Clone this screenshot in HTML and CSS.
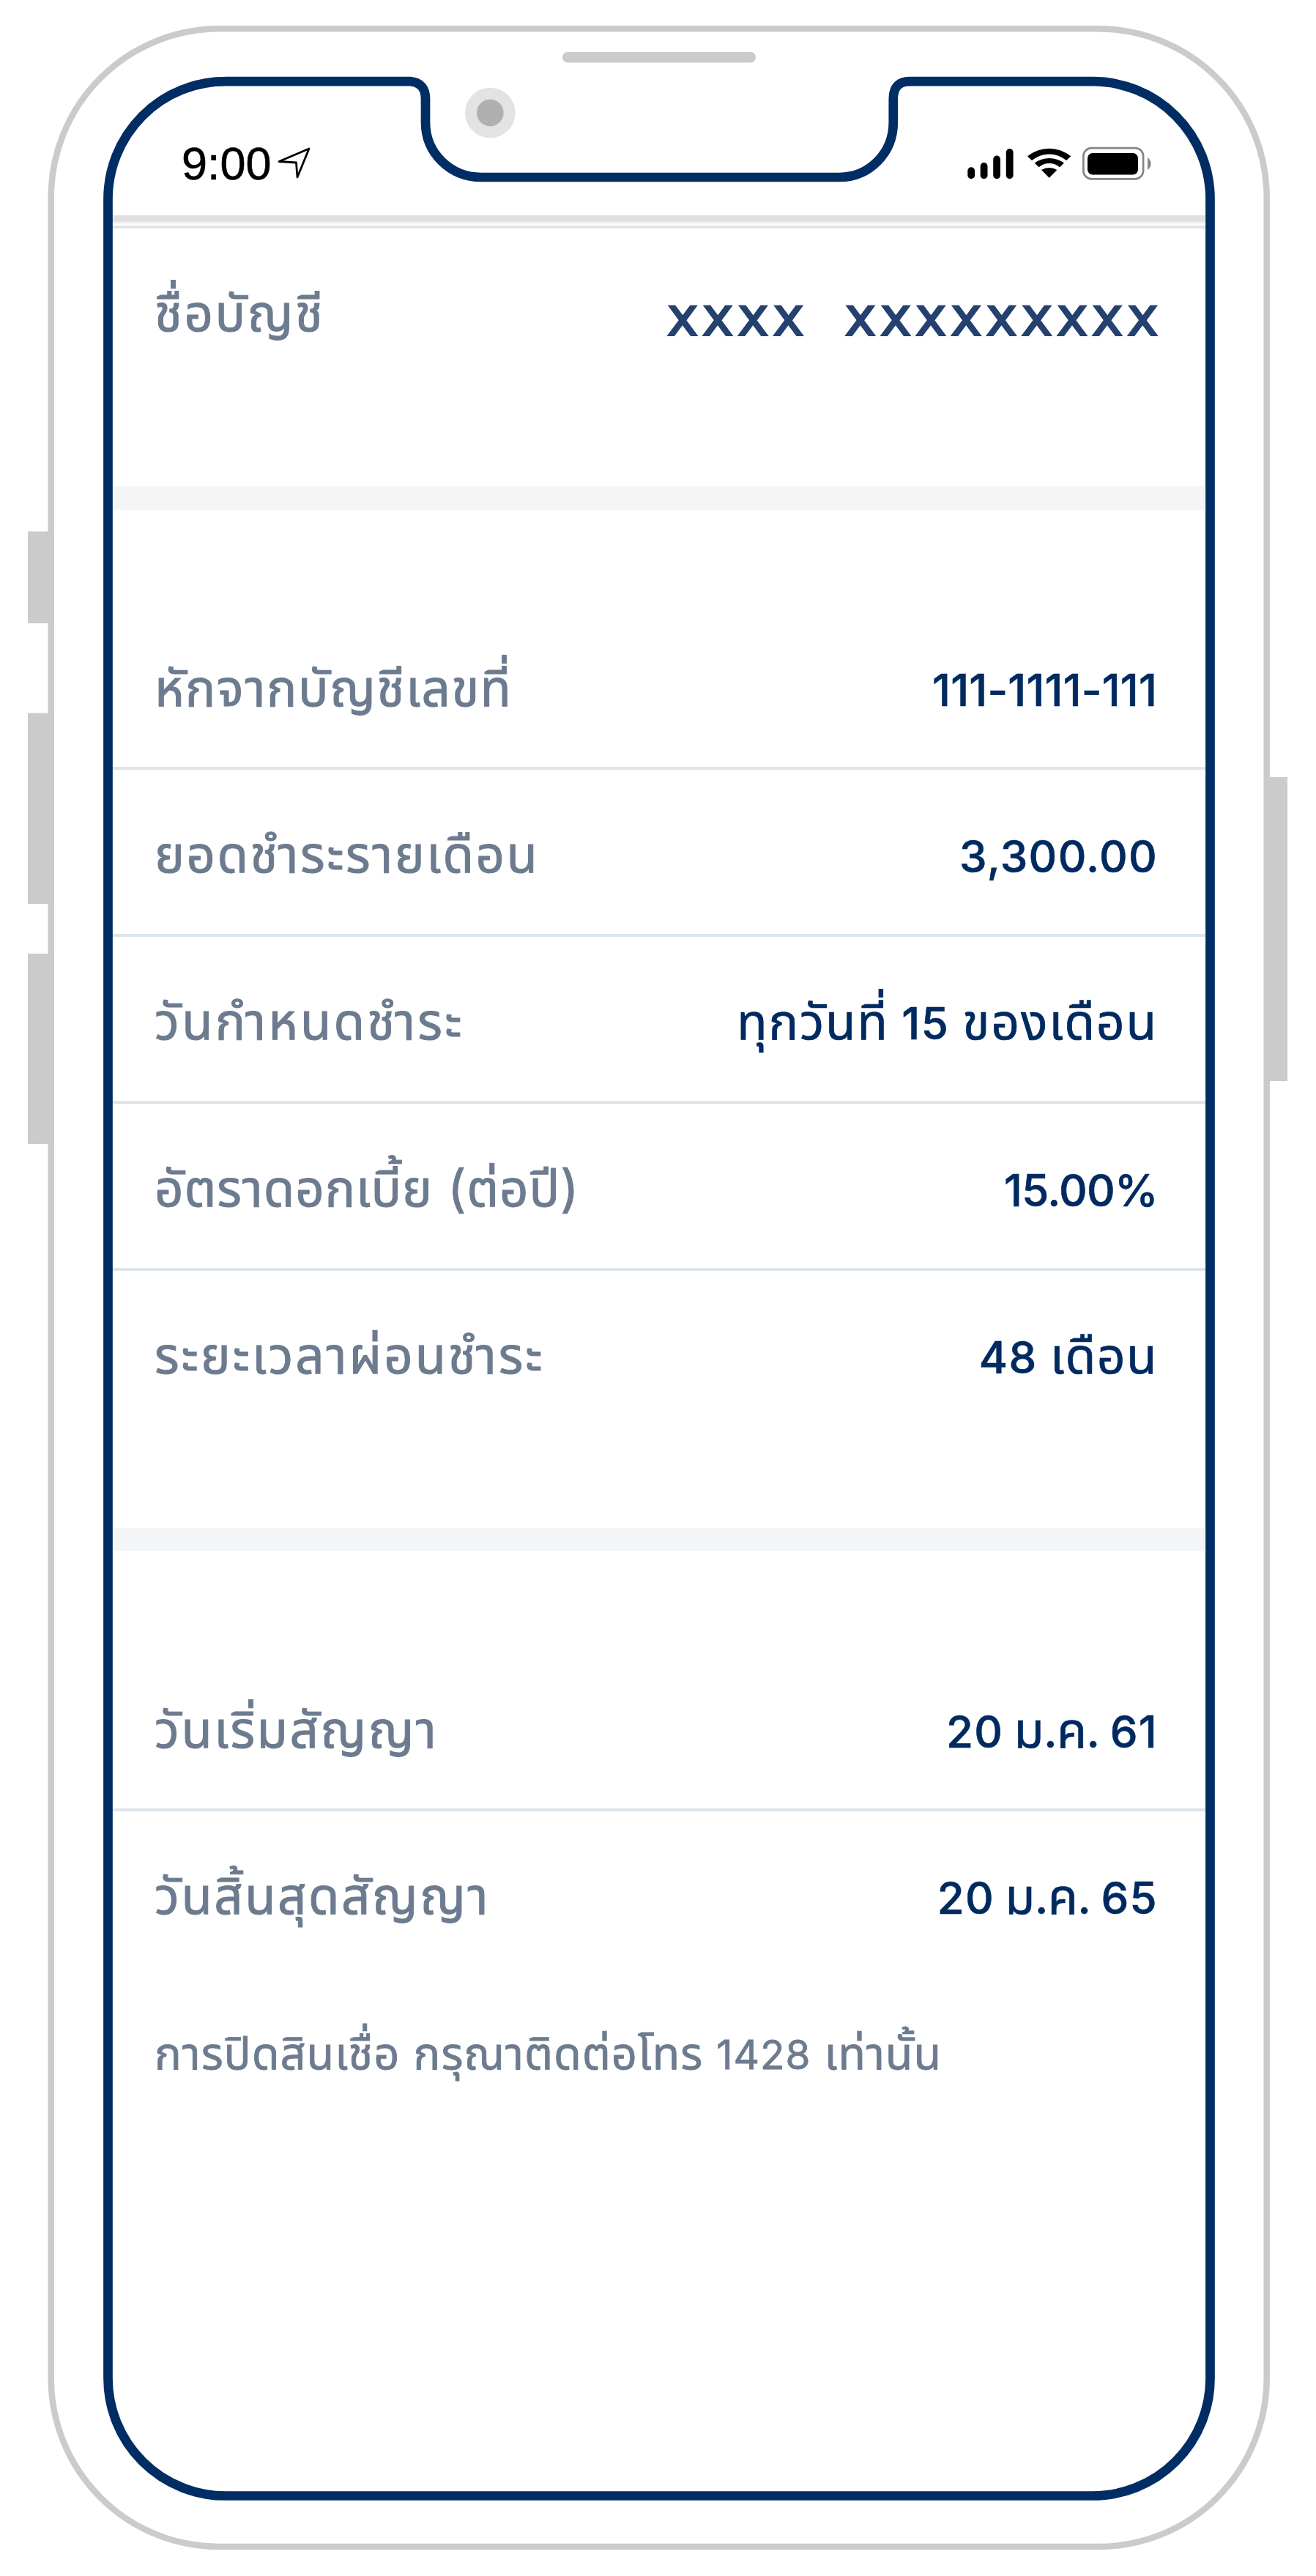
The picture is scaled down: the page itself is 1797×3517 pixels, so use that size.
FILE: index.html
```
<!DOCTYPE html>
<html lang="th">

<head>
    <meta charset="UTF-8">
    <meta name="viewport" content="width=device-width, initial-scale=1.0">
    <title>รายละเอียดสินเชื่อ</title>
    <link rel="stylesheet" href="styles.css">
</head>

<body>
    <div class="phone">
        <div class="screen">
            <div class="statusbar">
                <div class="clock">
                    <span class="time">9:00</span>
                    <svg class="location" viewBox="0 0 46 44">
                        <path d="M44 3 L3 20.500 L26.500 22 L28 42 Z" />
                    </svg>
                </div>
                <svg class="indicators" viewBox="1322 198 254 50">
                    <rect x="1323.300" y="228.300" width="9.800" height="15.900" rx="4.900" />
                    <rect x="1340.700" y="222" width="9.800" height="22.200" rx="4.900" />
                    <rect x="1358.200" y="212.500" width="9.800" height="31.700" rx="4.900" />
                    <rect x="1375.800" y="203" width="9.800" height="41.200" rx="4.900" />
                    <path d="M1405 213.300 A46.800 46.800 0 0 1 1464.300 213.300 L1458.200 219 A37 37 0 0 0 1411 219 Z" />
                    <path d="M1414.700 222.500 A34 34 0 0 1 1455 222.500 L1449 228.300 A22 22 0 0 0 1420.600 228.300 Z" />
                    <path d="M1424 232 A20 20 0 0 1 1445.400 232 L1434.700 242.700 Z" />
                    <rect class="battery-case" x="1481.400" y="202.100" width="81.700" height="42.200" rx="11" />
                    <rect x="1487" y="209" width="69" height="29.500" rx="7" />
                    <path class="battery-tip" d="M1569 215 Q1573.500 218 1573.500 223.500 Q1573.500 229 1569 232 Z" />
                </svg>
            </div>

            <div class="section account">
                <div class="row">
                    <span class="label name">ชื่อบัญชี</span>
                    <span class="value masked"><span>xxxx</span><span>xxxxxxxxx</span></span>
                </div>
            </div>

            <div class="section payment">
                <div class="row">
                    <span class="label">หักจากบัญชีเลขที่</span>
                    <span class="value acc-no">111-1111-111</span>
                </div>
                <div class="row">
                    <span class="label amount">ยอดชำระรายเดือน</span>
                    <span class="value">3,300.00</span>
                </div>
                <div class="row">
                    <span class="label due">วันกำหนดชำระ</span>
                    <span class="value every"><b>ทุกวันที่</b> 15 <b>ของเดือน</b></span>
                </div>
                <div class="row">
                    <span class="label rate">อัตราดอกเบี้ย (ต่อปี)</span>
                    <span class="value percent">15.00%</span>
                </div>
                <div class="row">
                    <span class="label period">ระยะเวลาผ่อนชำระ</span>
                    <span class="value">48 <b>เดือน</b></span>
                </div>
            </div>

            <div class="section contract">
                <div class="row">
                    <span class="label">วันเริ่มสัญญา</span>
                    <span class="value date">20 <b>ม.ค.</b> 61</span>
                </div>
                <div class="row">
                    <span class="label">วันสิ้นสุดสัญญา</span>
                    <span class="value date">20 <b>ม.ค.</b> 65</span>
                </div>
                <p class="note">การปิดสินเชื่อ กรุณาติดต่อโทร <span class="tel">1428</span> เท่านั้น</p>
            </div>
        </div>

        <!-- phone body, drawn over the screen -->
        <svg class="frame" viewBox="0 0 1797 3517">
            <g class="buttons">
                <rect x="38" y="725.500" width="32" height="125.500" />
                <rect x="38" y="973.500" width="32" height="260.500" />
                <rect x="38" y="1302" width="32" height="260" />
                <rect x="1730" y="1061" width="28" height="415" />
            </g>
            <rect class="body-line" x="69.700" y="39.300" width="1660" height="3437.700" rx="230" />
            <rect class="speaker" x="768" y="71" width="264" height="14.500" rx="7" />
            <circle class="camera" cx="669.300" cy="154" r="34.300" />
            <circle class="lens" cx="669.300" cy="154" r="18.300" />
            <path class="screen-line" d="M307 111.200 H560 Q581 113 581 135 V167 C581 209 615 242 657 242 H1146 C1187 242 1219.800 209 1219.800 167 V135 Q1219.800 111.200 1242 111.200 H1492 A160.500 160.500 0 0 1 1652.500 271.700 V3247 A160.500 160.500 0 0 1 1492 3407.500 H308 A160.500 160.500 0 0 1 147.500 3247 V271.700 A160.500 160.500 0 0 1 308 111.200 Z" />
        </svg>
    </div>
</body>

</html>
```
FILE: styles.css
```
* {
    box-sizing: border-box;
}

body {
    margin: 0;
    background-color: #fff;
    font-family: Inter, "Noto Sans Thai", "Noto Sans", sans-serif;
}

.phone {
    position: relative;
    width: 1797px;
    height: 3517px;
    padding: 105px 151px 0 153px;
}

.frame {
    position: absolute;
    top: 0;
    left: 0;
    width: 1797px;
    height: 3517px;
    fill: none;
}

.buttons,
.speaker {
    fill: #cbcbcb;
}

.body-line {
    stroke: #cbcbcb;
    stroke-width: 8.5px;
}

.camera {
    fill: #e3e3e3;
}

.lens {
    fill: #b0b0b0;
}

.screen-line {
    stroke: #002d63;
    stroke-width: 12.7px;
}

/* Status bar */
.statusbar {
    display: flex;
    justify-content: space-between;
    height: 189px;
    padding: 93px 72px 0 95px;
}

.clock {
    display: flex;
    gap: 7px;
}

.time {
    font-family: "Liberation Sans", sans-serif;
    font-size: 63px;
    line-height: 50px;
    color: #000;
    -webkit-text-stroke: 0.6px #000;
}

.location {
    width: 46px;
    height: 44px;
    margin-top: 2px;
    fill: none;
    stroke: #000;
    stroke-width: 2.8px;
    stroke-linejoin: round;
}

.indicators {
    width: 254px;
    height: 50px;
}

.battery-case {
    fill: none;
    stroke: #868686;
    stroke-width: 2.7px;
}

.battery-tip {
    fill: #868686;
}

/* Loan details */
.section {
    padding-top: 127.500px;
    border-top: 32px solid #f4f5f7;
}

.account {
    height: 370px;
    padding-top: 6px;
    border-top: 8px solid #e0e0e0;
    background: linear-gradient(#e6e6e6, #fff 5px);
}

.payment {
    height: 1422px;
}

.row {
    display: flex;
    justify-content: space-between;
    align-items: baseline;
    height: 227.750px;
    padding: 65px 65px 0 58px;
    line-height: 100px;
    border-bottom: 4px solid #dde4ea;
}

.row:last-of-type {
    border-bottom: none;
}

.account .row {
    border-top: 4px solid #dde4ea;
}

.label {
    font-size: 69px;
    letter-spacing: 1.600px;
    color: #6d7b8f;
    -webkit-text-stroke: 1px #6d7b8f;
}

.label.name,
.label.amount,
.contract .label {
    letter-spacing: 2.500px;
}

.label.due {
    letter-spacing: 3.200px;
}

.label.rate {
    letter-spacing: 0.900px;
}

.label.period {
    letter-spacing: 2.900px;
}

.value {
    font-size: 60px;
    font-weight: 500;
    letter-spacing: 1.300px;
    color: #002a60;
    -webkit-text-stroke: 0.6px #002a60;
}

.value b {
    font-size: 68px;
    font-weight: 400;
    -webkit-text-stroke: 0.7px #002a60;
}

.value.acc-no {
    margin-right: 1px;
    letter-spacing: 0.200px;
}

.value.every {
    letter-spacing: 1.700px;
}

.value.percent {
    letter-spacing: -0.700px;
}

.value.date {
    word-spacing: -3px;
}

.value.date b {
    font-size: 67px;
    letter-spacing: -1px;
}

.value.masked {
    display: flex;
    align-self: flex-start;
    gap: 50px;
    margin: 6px -6px 0 0;
    font-family: "DejaVu Sans", sans-serif;
    font-size: 73px;
    font-weight: 400;
    letter-spacing: 5px;
    color: #24416f;
    -webkit-text-stroke: 2.2px #24416f;
}

.note {
    margin: 52px 58px 0;
    font-size: 61.500px;
    line-height: 100px;
    letter-spacing: 0.900px;
    color: #6d7b8f;
    -webkit-text-stroke: 0.8px #6d7b8f;
}

.tel {
    font-size: 55px;
}
```
